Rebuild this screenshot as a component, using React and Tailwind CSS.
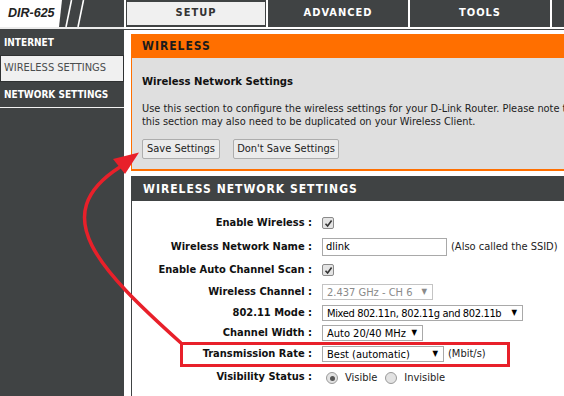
const Check = () => (
  <span className="w-[12px] h-[12px] border border-[#8a8a8a] rounded-[2px] bg-[#e4e4e4] flex items-center justify-center">
    <svg width="9" height="9" viewBox="0 0 9 9">
      <path d="M1.5 4.8 L3.6 7 L7.6 1.6" fill="none" stroke="#333" strokeWidth="1.6" />
    </svg>
  </span>
);

const Select = ({ text, w, disabled, tight }) => (
  <div
    className={`h-[16px] border flex items-center justify-between pl-[4px] pr-[5px] text-[11px] bg-white ${w} ${
      disabled ? "border-[#c4c4c4] text-[#8a8a8a]" : "border-[#a9a9a9] text-black"
    }`}
  >
    <span className={`leading-none whitespace-nowrap ${tight ? "tracking-[-0.35px]" : ""}`}>{text}</span>
    <span className={`text-[8px] leading-none ${disabled ? "text-[#8a8a8a]" : "text-black"}`}>▼</span>
  </div>
);

const Radio = ({ on }) => (
  <span className="w-[12px] h-[12px] rounded-full border border-[#9a9a9a] bg-[#e2e2e2] flex items-center justify-center">
    {on && <span className="w-[5px] h-[5px] rounded-full bg-[#555]" />}
  </span>
);

const Row = ({ label, h, children }) => (
  <div className={`flex items-center ${h}`}>
    <div className="w-[180px] text-right font-bold text-[11px] text-[#111] whitespace-nowrap">{label}</div>
    <div className="ml-[10px] flex items-center text-[11px] whitespace-nowrap">{children}</div>
  </div>
);

export default function App() {
  return (
    <div className="relative w-[564px] h-[396px] overflow-hidden bg-white flex font-['DejaVu_Sans_Condensed','DejaVu_Sans',sans-serif] text-[11px] text-black">
      {/* Sidebar */}
      <div className="w-[124px] shrink-0 bg-[#404344] flex flex-col">
        <div className="h-[27px] flex">
          <div className="w-[62px] h-full bg-white [clip-path:polygon(0_0,100%_0,calc(100%-3px)_100%,0_100%)] flex items-center pl-[8px]">
            <span className="font-['Liberation_Sans',sans-serif] italic font-bold text-[12.5px] text-[#222]">DIR-625</span>
          </div>
          <svg width="30" height="27" viewBox="0 0 30 27">
            <line x1="9.5" y1="0" x2="4" y2="27" stroke="#ffffff" strokeWidth="1.6" />
            <line x1="21.5" y1="0" x2="16" y2="27" stroke="#ffffff" strokeWidth="1.6" />
          </svg>
        </div>
        <div className="h-[2px] bg-[#ececec]" />
        <div className="h-[26px] flex items-center pl-[4px] text-white font-bold text-[10px]">INTERNET</div>
        <div className="h-[27px] border border-[#2f3132] bg-[#f0f0f0] flex items-center pl-[3px] text-[#4a4d4e] text-[11px]">WIRELESS SETTINGS</div>
        <div className="h-[25px] flex items-center pl-[4px] text-white font-bold text-[10px]">NETWORK SETTINGS</div>
        <div className="h-[1px] bg-[#f2f2f2]" />
      </div>

      {/* Main */}
      <div className="flex-1 flex flex-col min-w-0">
        <div className="h-[27px] flex gap-[2px] pl-[2px] shrink-0">
          <div className="w-[140px] shrink-0 bg-[#404344] px-[1px] py-[2px]">
            <div className="h-full bg-[#f0f0f0] flex items-center justify-center font-bold tracking-[1px] text-[#333]">SETUP</div>
          </div>
          <div className="w-[140px] shrink-0 bg-[#404344] flex items-center justify-center font-bold tracking-[1px] text-white">ADVANCED</div>
          <div className="w-[140px] shrink-0 bg-[#404344] flex items-center justify-center font-bold tracking-[1px] text-white">TOOLS</div>
          <div className="w-[140px] shrink-0 bg-[#404344]" />
        </div>
        <div className="h-[2px] shrink-0" />
        <div className="h-[1px] bg-[#404344] shrink-0" />
        <div className="pl-[7px] pt-[4px] flex-1 flex flex-col">
          <div className="w-[480px]">
            <div className="h-[24px] bg-[#ff6f00] flex items-center pl-[11px] font-bold text-[12px] tracking-[1px] text-[#1b1b1b]">WIRELESS</div>
            <div className="bg-[#dfdfdf] border-l border-r border-b-2 border-[#ff6f00] pl-[10px] pt-[16px] pb-[10px]">
              <div className="h-[16px] flex items-center font-bold text-[11.2px] text-[#111]">Wireless Network Settings</div>
              <div className="mt-[12px] text-[10.9px] leading-[13px] text-[#222] whitespace-nowrap">
                <div>Use this section to configure the wireless settings for your D-Link Router. Please note that changes made in</div>
                <div>this section may also need to be duplicated on your Wireless Client.</div>
              </div>
              <div className="mt-[11px] flex gap-[13px]">
                <div className="h-[20px] w-[78px] border border-[#adadad] rounded-[2px] bg-[#ebebeb] flex items-center justify-center text-[11px] text-[#222] whitespace-nowrap">Save Settings</div>
                <div className="h-[20px] w-[106px] border border-[#adadad] rounded-[2px] bg-[#ebebeb] flex items-center justify-center text-[11px] text-[#222] whitespace-nowrap">Don't Save Settings</div>
              </div>
            </div>
          </div>
          <div className="w-[480px] mt-[5px] flex-1 flex flex-col">
            <div className="h-[25px] bg-[#404344] flex items-center pl-[12px] font-bold text-[12px] tracking-[1px] text-white">WIRELESS NETWORK SETTINGS</div>
            <div className="flex-1 border-l border-[#404344] pt-[10px]">
              <Row label="Enable Wireless :" h="h-[24px]"><Check /></Row>
              <Row label="Wireless Network Name :" h="h-[24px]">
                <div className="w-[125px] h-[18px] border border-[#a9a9a9] flex items-center pl-[3px] text-[11px]">dlink</div>
                <span className="ml-[4px] text-[#222]">(Also called the SSID)</span>
              </Row>
              <Row label="Enable Auto Channel Scan :" h="h-[22px]"><Check /></Row>
              <Row label="Wireless Channel :" h="h-[22px]"><Select text="2.437 GHz - CH 6" w="w-[111px]" disabled /></Row>
              <Row label="802.11 Mode :" h="h-[20px]"><Select text="Mixed 802.11n, 802.11g and 802.11b" w="w-[201px]" tight /></Row>
              <Row label="Channel Width :" h="h-[20px]"><Select text="Auto 20/40 MHz" w="w-[101px]" /></Row>
              <Row label="Transmission Rate :" h="h-[22px]">
                <Select text="Best (automatic)" w="w-[122px]" />
                <span className="ml-[4px] text-[#222]">(Mbit/s)</span>
              </Row>
              <Row label="Visibility Status :" h="h-[24px]">
                <div className="flex items-center ml-[4px] mt-[2px]">
                  <Radio on />
                  <span className="ml-[7px] text-[#222]">Visible</span>
                  <span className="ml-[8px]"><Radio /></span>
                  <span className="ml-[7px] text-[#222]">Invisible</span>
                </div>
              </Row>
            </div>
          </div>
        </div>
      </div>

      {/* Annotation overlay */}
      <svg className="absolute inset-0 pointer-events-none" width="564" height="396" viewBox="0 0 564 396">
        <path d="M181 343 C100 270 45 215 120 167" fill="none" stroke="#e8202a" strokeWidth="3.5" />
        <polygon points="113,159 139,152.5 125,174" fill="#e8202a" />
        <rect x="181.5" y="343.5" width="327" height="22" fill="none" stroke="#e8202a" strokeWidth="3" />
      </svg>
    </div>
  );
}
